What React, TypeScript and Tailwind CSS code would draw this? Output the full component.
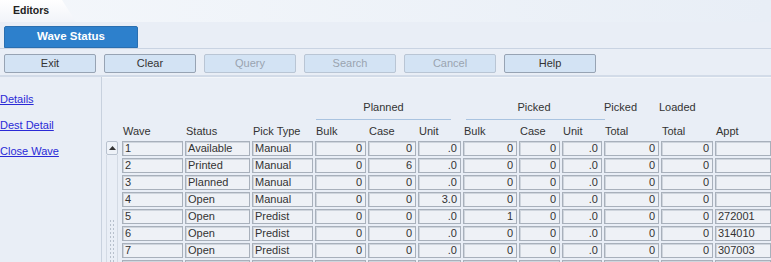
const buttons = [
  { label: "Exit", enabled: true },
  { label: "Clear", enabled: true },
  { label: "Query", enabled: false },
  { label: "Search", enabled: false },
  { label: "Cancel", enabled: false },
  { label: "Help", enabled: true },
];

const rows = [
  ["1", "Available", "Manual", "0", "0", ".0", "0", "0", ".0", "0", "0", ""],
  ["2", "Printed", "Manual", "0", "6", ".0", "0", "0", ".0", "0", "0", ""],
  ["3", "Planned", "Manual", "0", "0", ".0", "0", "0", ".0", "0", "0", ""],
  ["4", "Open", "Manual", "0", "0", "3.0", "0", "0", ".0", "0", "0", ""],
  ["5", "Open", "Predist", "0", "0", ".0", "1", "0", ".0", "0", "0", "272001"],
  ["6", "Open", "Predist", "0", "0", ".0", "0", "0", ".0", "0", "0", "314010"],
  ["7", "Open", "Predist", "0", "0", ".0", "0", "0", ".0", "0", "0", "307003"],
  ["8", "Planned", "Manual", "0", "0", ".0", "0", "0", ".0", "0", "0", ""],
];

const heads = ["Wave", "Status", "Pick Type", "Bulk", "Case", "Unit", "Bulk", "Case", "Unit", "Total", "Total", "Appt"];

// text columns are left aligned, the rest are numbers
const isText = (i: number) => i < 3 || i === 11;

const cols = "grid grid-cols-[61px_65px_61px_51px_48px_43px_54px_41px_40px_55px_52px_56px] gap-x-[2px]";

export default function App() {
  return (
    <div className="w-[771px] h-[262px] overflow-hidden bg-[#e9eef6] font-['Liberation_Sans',Arial,sans-serif] text-[11px] text-[#333]">
      {/* Editors band */}
      <div className="h-[22px] bg-gradient-to-r from-[#f4f7fb] to-[#e8eef6] relative">
        <div className="h-[22px] w-[76px] bg-gradient-to-b from-white to-[#f1f4f9] [clip-path:polygon(0_0,62px_0,76px_22px,0_22px)] flex items-center pl-[13px]">
          <span className="font-bold text-[10.5px] text-[#222]">Editors</span>
        </div>
      </div>

      {/* Tab row */}
      <div className="pt-[4px] pl-[4px] border-b border-[#c9d3e2] h-[27px]">
        <div className="w-[134px] h-[22px] bg-[#2d80cc] rounded-t-[2px] border border-[#2a6fb0] flex items-center justify-center">
          <span className="text-white font-bold text-[11.5px]">Wave Status</span>
        </div>
      </div>

      {/* Buttons */}
      <div className="h-[28px] border-b-2 border-[#d2dbe8] flex items-start pt-[5px] pl-[4px] gap-[8px]">
        {buttons.map((b) => (
          <button
            key={b.label}
            type="button"
            className={`w-[92px] h-[19px] rounded-[2px] border bg-[#d3e3f4] text-[11px] leading-none ${
              b.enabled ? "border-[#97a3b3] text-[#333]" : "border-[#b9c5d4] text-[#9aa4b0]"
            }`}
          >
            {b.label}
          </button>
        ))}
      </div>

      {/* Body */}
      <div className="flex h-[200px]">
        {/* Left links */}
        <div className="w-[102px] border-r border-[#c8d1de] flex flex-col pt-[14px] gap-[10px]">
          {["Details", "Dest Detail", "Close Wave"].map((l) => (
            <a key={l} href="#" className="text-[#2a2ad6] underline text-[11px] leading-[16px]">
              {l}
            </a>
          ))}
        </div>

        {/* Table area */}
        <div className="flex-1 border-t border-[#f3f6fa] pt-[1px]">
          {/* group headers */}
          <div className={`${cols} pl-[20px] pt-[21px] h-[42px]`}>
            <div className="col-span-3" />
            <div className="col-span-3 flex flex-col pl-[1px] pr-[10px]">
              <span className="text-center leading-[14px]">Planned</span>
              <span className="mt-[5px] border-b border-[#a9c3e0]" />
            </div>
            <div className="col-span-3 flex flex-col pl-[3px]">
              <span className="text-center leading-[14px]">Picked</span>
              <span className="mt-[5px] border-b border-[#a9c3e0] -mr-[3px]" />
            </div>
            <span className="leading-[14px]">Picked</span>
            <span className="leading-[14px] -ml-[2px]">Loaded</span>
          </div>

          {/* column headers */}
          <div className={`${cols} pl-[20px] h-[20px] items-center`}>
            {heads.map((h, i) => (
              <span key={i} className="pl-[1px] leading-[14px]">
                {h}
              </span>
            ))}
          </div>

          {/* rows + scrollbar */}
          <div className="flex pl-[4px] gap-[4px]">
            <div className="w-[12px] flex flex-col">
              <div className="h-[14px] border border-[#b9c2cf] rounded-[2px] bg-[#eef2f8] flex items-center justify-center">
                <svg width="7" height="4" viewBox="0 0 7 4">
                  <path d="M0 4 L3.5 0 L7 4 Z" fill="#333" />
                </svg>
              </div>
              <div className="h-[64px] border-x border-[#d3dae4]" />
              <div className="h-[50px] border-x border-[#d3dae4] flex justify-center">
                <div className="w-[6px] h-full bg-[radial-gradient(#b7c0cc_0.8px,transparent_1px)] [background-size:3px_4px]" />
              </div>
            </div>
            <div className="flex flex-col gap-[2px]">
              {rows.map((r, ri) => (
                <div key={ri} className={`${cols} h-[15px]`}>
                  {r.map((c, ci) => (
                    <div
                      key={ci}
                      className={`h-[15px] border border-[#a8b0bb] bg-[#eef1f6] shadow-[inset_1px_1px_0_#cfd5dd] leading-[13px] text-[11px] ${
                        isText(ci) ? "pl-[2px] text-left" : "pr-[3px] text-right"
                      }`}
                    >
                      {c}
                    </div>
                  ))}
                </div>
              ))}
            </div>
          </div>
        </div>
      </div>
    </div>
  );
}
